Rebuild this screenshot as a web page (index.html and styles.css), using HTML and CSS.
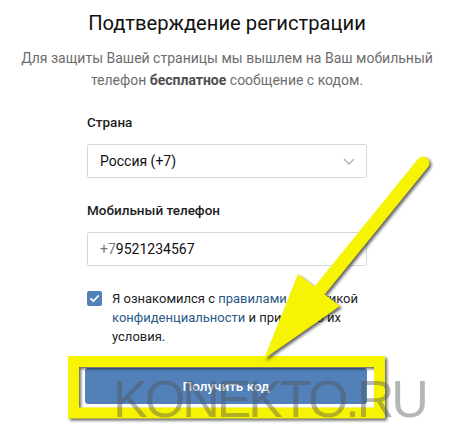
FILE: index.html
```html
<!DOCTYPE html>
<html lang="ru">
<head>
<meta charset="utf-8">
<title>Подтверждение регистрации</title>
<link rel="stylesheet" href="styles.css">
</head>
<body>
<div class="page">
  <h1 class="title">Подтверждение регистрации</h1>
  <p class="desc">Для защиты Вашей страницы мы вышлем на Ваш мобильный<br>телефон <b>бесплатное</b> сообщение с кодом.</p>
  <div class="form">
    <div class="label">Страна</div>
    <div class="field select">
      <span>Россия (+7)</span>
      <svg class="chev" width="12" height="7" viewBox="0 0 12 7"><path d="M1 1l5 5 5-5" fill="none" stroke="#a9b1ba" stroke-width="1.3"/></svg>
    </div>
    <div class="label label2">Мобильный телефон</div>
    <div class="field"><span class="prefix">+7</span>9521234567</div>
    <div class="agree">
      <span class="cb"><svg width="15" height="15" viewBox="0 0 15 15"><path d="M4 7.8l2.4 2.4L11.2 5" fill="none" stroke="#fff" stroke-width="1.8" stroke-linecap="round" stroke-linejoin="round"/></svg></span>
      <p>Я ознакомился с <a href="#">правилами</a>, политикой <a href="#">конфиденциальности</a> и принимаю их условия.</p>
    </div>
    <button class="btn">Получить код</button>
  </div>

  <svg class="annot" width="450" height="429" viewBox="0 0 450 429">
    <g class="shadowed">
      <rect x="73.5" y="361.5" width="306" height="51.5" fill="none" stroke="#f6f303" stroke-width="11"/>
    </g>
    <g class="shadowed">
      <line x1="423" y1="163" x2="320" y2="290" stroke="#f6f303" stroke-width="13" stroke-linecap="round"/>
      <polygon points="298,274 340,306 264,359" fill="#f6f303"/>
    </g>
  </svg>
  <div class="watermark">KONEKTO.RU</div>
</div>
</body>
</html>
```

FILE: styles.css
```css
* { box-sizing: border-box; }
html, body { margin: 0; padding: 0; background: #fff; }
body { font-family: Roboto, "Noto Sans", "Liberation Sans", sans-serif; }

.page {
  position: relative;
  width: 450px;
  height: 429px;
  overflow: hidden;
  padding: 11px 0 0 4px;
}

.title {
  margin: 0;
  font-size: 20.2px;
  font-weight: 400;
  line-height: 24px;
  text-align: center;
  color: #111;
}

.desc {
  margin: 12px 0 0;
  font-size: 14px;
  line-height: 22px;
  text-align: center;
  color: #6d6d6d;
}
.desc b { color: #4e4e4e; font-weight: 700; }

.form {
  width: 280px;
  margin: 22px auto 0;
}

.label {
  font-size: 13.5px;
  font-weight: 500;
  line-height: 18px;
  color: #222;
  margin-bottom: 13px;
}
.label2 { margin-top: 23px; }

.field {
  height: 34px;
  border: 1px solid #d3d9de;
  border-radius: 2px;
  padding: 0 11px 0 12px;
  display: flex;
  align-items: center;
  font-size: 14px;
  color: #111;
}
.select { justify-content: space-between; }
.chev { display: block; margin-top: 1px; }
.prefix { color: #7a7a7a; }

.agree {
  display: flex;
  align-items: flex-start;
  gap: 10px;
  margin-top: 23px;
}
.cb {
  flex: none;
  width: 15px;
  height: 15px;
  margin-top: 2px;
  border-radius: 2px;
  background: #5181b8;
  display: flex;
}
.agree p {
  margin: 0;
  font-size: 13px;
  line-height: 19px;
  color: #222;
  width: 255px;
}
.agree a { color: #2a5885; text-decoration: none; }

.btn {
  display: block;
  width: 282px;
  height: 36px;
  margin: 22px 0 0 -2px;
  border: 0;
  border-radius: 3px;
  background: #5181b8;
  color: #fff;
  font-family: inherit;
  font-size: 13.5px;
  font-weight: 500;
}

.annot {
  position: absolute;
  left: 0;
  top: 0;
  pointer-events: none;
}
.shadowed { filter: drop-shadow(2px 2px 1.5px rgba(0,0,0,0.6)); }

.watermark {
  position: absolute;
  left: 113px;
  top: 373px;
  font-family: "Liberation Sans", Arial, sans-serif;
  font-size: 52px;
  line-height: 52px;
  letter-spacing: -3px;
  color: rgba(80, 80, 80, 0.42);
  pointer-events: none;
  white-space: nowrap;
}
```
